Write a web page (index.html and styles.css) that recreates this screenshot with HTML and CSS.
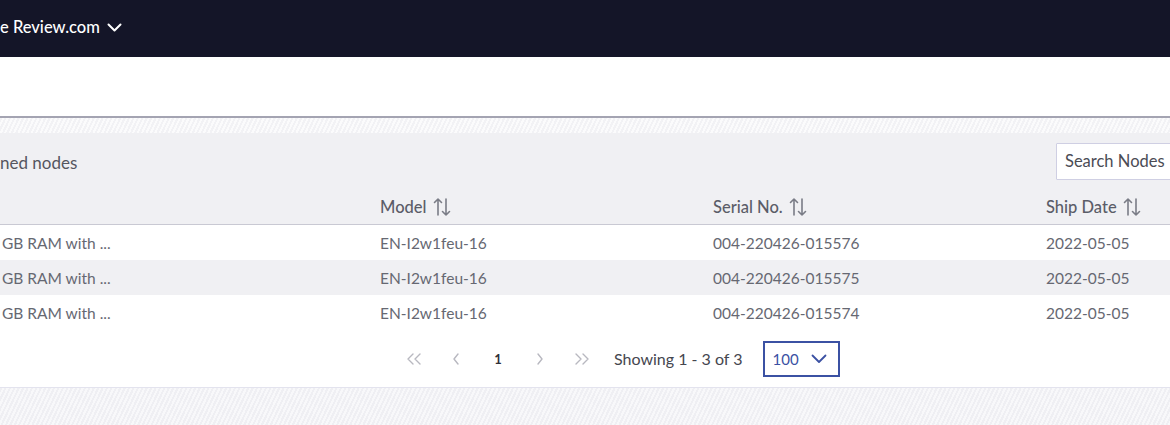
FILE: index.html
```html
<!DOCTYPE html>
<html lang="en">
<head>
    <meta charset="UTF-8">
    <meta name="viewport" content="width=device-width, initial-scale=1.0">
    <title>Nodes</title>
    <link rel="stylesheet" href="styles.css">
</head>
<body>

<!-- top navigation -->
<header class="topbar">
    <div class="brand">
        <span>e Review.com</span>
        <svg class="brand-caret" width="15" height="10" viewBox="0 0 15 10">
            <polyline points="1.5,1.5 7.5,7.5 13.5,1.5" fill="none" stroke="#fff" stroke-width="2" stroke-linecap="round" stroke-linejoin="round"/>
        </svg>
    </div>
</header>

<div class="subbar"></div>
<div class="hatch"></div>

<section class="panel">
    <div class="panel-head">
        <h2 class="panel-title">ned nodes</h2>
        <input class="search" type="text" placeholder="Search Nodes">
    </div>

    <table class="nodes">
        <colgroup>
            <col class="col-name">
            <col class="col-model">
            <col class="col-serial">
            <col class="col-date">
        </colgroup>
        <thead>
            <tr>
                <th></th>
                <th>Model <svg class="sort" width="18" height="20" viewBox="0 0 18 20"><path d="M5 18V2M1.5 5.5L5 2l3.5 3.5M13 2v16M9.5 14.5L13 18l3.5-3.5" fill="none" stroke="#7a7c86" stroke-width="1.6" stroke-linecap="round" stroke-linejoin="round"/></svg></th>
                <th>Serial No. <svg class="sort" width="18" height="20" viewBox="0 0 18 20"><path d="M5 18V2M1.5 5.5L5 2l3.5 3.5M13 2v16M9.5 14.5L13 18l3.5-3.5" fill="none" stroke="#7a7c86" stroke-width="1.6" stroke-linecap="round" stroke-linejoin="round"/></svg></th>
                <th>Ship Date <svg class="sort" width="18" height="20" viewBox="0 0 18 20"><path d="M5 18V2M1.5 5.5L5 2l3.5 3.5M13 2v16M9.5 14.5L13 18l3.5-3.5" fill="none" stroke="#7a7c86" stroke-width="1.6" stroke-linecap="round" stroke-linejoin="round"/></svg></th>
            </tr>
        </thead>
        <tbody>
            <tr>
                <td class="first">GB RAM with ...</td>
                <td>EN-I2w1feu-16</td>
                <td>004-220426-015576</td>
                <td>2022-05-05</td>
            </tr>
            <tr>
                <td class="first">GB RAM with ...</td>
                <td>EN-I2w1feu-16</td>
                <td>004-220426-015575</td>
                <td>2022-05-05</td>
            </tr>
            <tr>
                <td class="first">GB RAM with ...</td>
                <td>EN-I2w1feu-16</td>
                <td>004-220426-015574</td>
                <td>2022-05-05</td>
            </tr>
        </tbody>
    </table>

    <div class="pager">
        <span class="pg pg-wide">
            <svg width="16" height="12" viewBox="0 0 16 12"><path d="M7 1L2 6l5 5M14 1L9 6l5 5" fill="none" stroke="#b8b8c0" stroke-width="1.4" stroke-linecap="round" stroke-linejoin="round"/></svg>
        </span>
        <span class="pg">
            <svg width="8" height="12" viewBox="0 0 8 12"><path d="M6 1L2 6l4 5" fill="none" stroke="#b8b8c0" stroke-width="1.4" stroke-linecap="round" stroke-linejoin="round"/></svg>
        </span>
        <span class="pg pg-current">1</span>
        <span class="pg">
            <svg width="8" height="12" viewBox="0 0 8 12"><path d="M2 1l4 5-4 5" fill="none" stroke="#b8b8c0" stroke-width="1.4" stroke-linecap="round" stroke-linejoin="round"/></svg>
        </span>
        <span class="pg pg-wide">
            <svg width="16" height="12" viewBox="0 0 16 12"><path d="M2 1l5 5-5 5M9 1l5 5-5 5" fill="none" stroke="#b8b8c0" stroke-width="1.4" stroke-linecap="round" stroke-linejoin="round"/></svg>
        </span>
        <span class="pg-info">Showing 1 - 3 of 3</span>
        <div class="pg-size">
            <span>100</span>
            <svg width="16" height="10" viewBox="0 0 16 10"><polyline points="1.5,1.5 8,8 14.5,1.5" fill="none" stroke="#3b51a3" stroke-width="1.8" stroke-linecap="round" stroke-linejoin="round"/></svg>
        </div>
    </div>
</section>

<div class="backdrop"></div>

</body>
</html>
```

FILE: styles.css
```css
body {
    margin: 0;
    overflow: hidden;
    font-family: Lato, "Open Sans", sans-serif;
    background-color: #fff;
}
.topbar {
    height: 57px;
    background-color: #141528;
    display: flex;
    align-items: center;
}
.brand {
    display: flex;
    align-items: center;
    gap: 7px;
    color: #fff;
    font-size: 16.5px;
    font-weight: 500;
    margin-top: -3px;
}
.brand-caret {
    margin-top: 1px;
}
.subbar {
    height: 59px;
    border-bottom: 2px solid #a4a4b2;
}
.hatch {
    height: 15px;
    background: repeating-linear-gradient(115deg, #f2f2f5 0 2px, #fbfbfc 2px 4px);
}
.panel {
    background-color: #f0f0f3;
    border-bottom: 1px solid #e3e3ee;
}
.panel-head {
    height: 57px;
    display: flex;
    align-items: center;
    justify-content: space-between;
}
.panel-title {
    margin: 0;
    font-size: 17px;
    font-weight: 400;
    color: #55565f;
    margin-top: 1px;
}
.search {
    box-sizing: border-box;
    width: 144px;
    height: 37px;
    margin-right: -30px;
    margin-top: -1px;
    border: 1px solid #cfcfe3;
    border-radius: 1px;
    padding: 0 8px;
    font-family: inherit;
    font-size: 16.5px;
    color: #444;
    background-color: #fff;
}
.search::placeholder {
    color: #4b4c55;
}
.nodes {
    width: 100%;
    border-collapse: collapse;
    table-layout: fixed;
}
.col-name { width: 380px; }
.col-model { width: 333px; }
.col-serial { width: 333px; }
.col-date { width: auto; }
.nodes th {
    height: 34px;
    text-align: left;
    padding: 0;
    font-size: 16.5px;
    font-weight: 500;
    color: #5b5d68;
    border-bottom: 1px solid #c9c9d3;
    vertical-align: middle;
}
.sort {
    vertical-align: -4px;
    margin-left: 2px;
}
.nodes td {
    height: 35px;
    padding: 0;
    font-size: 15.5px;
    color: #666872;
    white-space: nowrap;
}
.nodes td.first {
    padding-left: 2px;
}
.nodes tbody tr {
    background-color: #fff;
}
.nodes tbody tr:nth-child(even) {
    background-color: #f0f0f3;
}
.pager {
    height: 57px;
    background-color: #fff;
    display: flex;
    align-items: center;
    padding-left: 393px;
}
.pg {
    width: 42px;
    display: flex;
    justify-content: center;
    align-items: center;
    margin-top: 1px;
}
.pg-current {
    color: #2f3038;
    font-size: 13px;
    font-weight: 700;
    margin-top: 0;
}
.pg-info {
    font-size: 16px;
    color: #45464f;
    margin-left: 11px;
}
.pg-size {
    box-sizing: border-box;
    width: 77px;
    height: 36px;
    margin-left: 20px;
    border: 2px solid #3b51a3;
    display: flex;
    align-items: center;
    justify-content: space-between;
    padding: 0 11px 0 8px;
    color: #3b51a3;
    font-size: 15px;
}
.backdrop {
    height: 40px;
    background: repeating-linear-gradient(115deg, #efeff3 0 2px, #f8f8fa 2px 4px);
}
```
